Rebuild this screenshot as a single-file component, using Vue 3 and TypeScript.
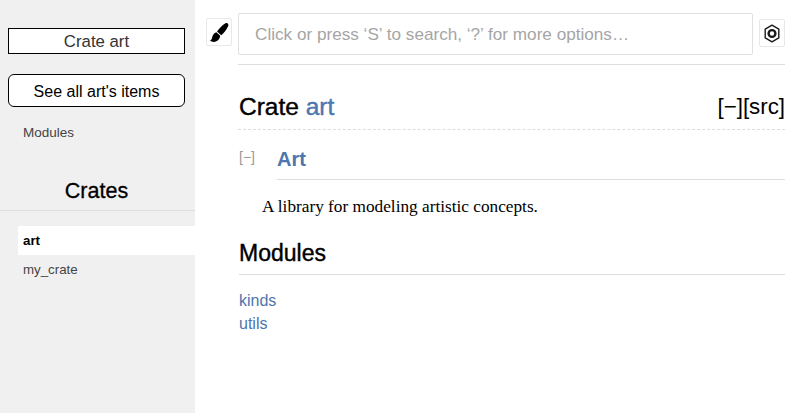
<script setup lang="ts">
const crates: { name: string; current: boolean }[] = [
  { name: 'art', current: true },
  { name: 'my_crate', current: false },
]
const modules: string[] = ['kinds', 'utils']
</script>

<template>
  <div class="page">
    <aside class="sidebar">
      <p class="location">Crate art</p>
      <a class="all-items">See all art's items</a>
      <a class="side-link">Modules</a>
      <h2 class="crates-title">Crates</h2>
      <ul class="crate-list">
        <li v-for="c in crates" :key="c.name" :class="{ current: c.current }">{{ c.name }}</li>
      </ul>
    </aside>
    <main class="main">
      <nav class="search-bar">
        <div class="brush-btn">
          <svg width="19" height="19" viewBox="0 0 17 17">
            <path d="M13.800.2C15.600-.4 16.900.9 16.300 2.600 15 5.600 12.800 8.600 10 11L6.300 7.500C8.500 4.800 11.200 1.400 13.800.2z" fill="#000" />
            <path d="M5.700 8.300l3.400 3.200C9 14.200 6.600 16.900 3.500 16.900 2 16.900.8 16.500 0 15.700 1.400 15.300 1.700 14 2 12.600 2.500 10.500 3.700 8.900 5.700 8.300z" fill="#000" />
          </svg>
        </div>
        <div class="search-input">Click or press ‘S’ to search, ‘?’ for more options…</div>
        <div class="gear-btn">
          <svg width="16" height="19" viewBox="0 0 16 19" fill="none" stroke="#1a1a1a">
            <path d="M8 1.200l6.800 3.900v8.800L8 17.800l-6.800-3.900V5.100z" stroke-width="1.400" stroke-linejoin="round" />
            <circle cx="8" cy="9.500" r="3.400" stroke-width="2.400" />
          </svg>
        </div>
      </nav>
      <header class="title-row">
        <h1>Crate <a>art</a></h1>
        <span class="out-of-band">[−][src]</span>
      </header>
      <section class="doc-head">
        <span class="toggle">[−]</span>
        <h2 class="doc-title">Art</h2>
      </section>
      <p class="doc-text">A library for modeling artistic concepts.</p>
      <h2 class="section-title">Modules</h2>
      <div class="module-list">
        <a v-for="m in modules" :key="m">{{ m }}</a>
      </div>
    </main>
  </div>
</template>

<style scoped>
.page {
  display: flex;
  width: 800px;
  height: 413px;
  overflow: hidden;
  background: #fff;
  color: #000;
  font-family: "Liberation Sans", Arial, sans-serif;
}
.sidebar {
  box-sizing: border-box;
  width: 195px;
  flex: none;
  height: 100%;
  background: #f0f0f0;
  padding-top: 28px;
}
.location {
  box-sizing: border-box;
  margin: 0 10px 0 8px;
  height: 26px;
  line-height: 25px;
  border: 1px solid #000;
  background: #fff;
  text-align: center;
  font-size: 16.800px;
  color: #333;
}
.all-items {
  display: block;
  box-sizing: border-box;
  margin: 20px 10px 0 8px;
  height: 33px;
  line-height: 33px;
  border: 1px solid #000;
  border-radius: 6px;
  background: #fff;
  text-align: center;
  font-size: 16px;
  color: #000;
}
.side-link {
  display: block;
  margin: 17px 0 0 23px;
  line-height: 18px;
  font-size: 13.500px;
  color: #444;
}
.crates-title {
  box-sizing: border-box;
  margin: 33px 0 0;
  height: 36px;
  padding-right: 2px;
  line-height: 32px;
  border-bottom: 1px solid #ddd;
  text-align: center;
  font-size: 21.500px;
  font-weight: 400;
  color: #000;
  -webkit-text-stroke: 0.300px #000;
}
.crate-list {
  list-style: none;
  margin: 15px 0 0 18px;
  padding: 0;
  font-size: 13.300px;
  color: #444;
}
.crate-list li {
  height: 29px;
  line-height: 29px;
  padding-left: 5px;
}
.crate-list li.current {
  background: #fff;
  color: #000;
  font-weight: 700;
}
.main {
  box-sizing: border-box;
  flex: 1;
  min-width: 0;
  padding: 13px 15px 0 11px;
}
.search-bar {
  display: flex;
  align-items: flex-start;
  gap: 6px;
}
.brush-btn,
.gear-btn {
  box-sizing: border-box;
  display: flex;
  align-items: center;
  justify-content: center;
  flex: none;
  width: 26px;
  height: 28px;
  margin-top: 5px;
  border: 1px solid #e8e8e8;
  border-radius: 2px;
  background: #fff;
}
.gear-btn {
  margin-top: 6px;
}
.search-input {
  box-sizing: border-box;
  flex: 1;
  height: 42px;
  line-height: 40px;
  padding-left: 16px;
  border: 1px solid #e0e0e0;
  border-radius: 2px;
  font-size: 17.150px;
  color: #a5a5a5;
}
.title-row {
  display: flex;
  align-items: center;
  justify-content: space-between;
  box-sizing: border-box;
  margin: 9px 0 0 32px;
  height: 66px;
  padding: 20px 0 0 1px;
  border-top: 1px solid #ddd;
  border-bottom: 1px dashed #ddd;
}
.title-row h1 {
  margin: 0;
  font-size: 24.500px;
  font-weight: 400;
  -webkit-text-stroke: 0.400px #000;
}
.title-row h1 a {
  color: #4d76ae;
  -webkit-text-stroke: 0.400px #4d76ae;
}
.out-of-band {
  font-size: 22.300px;
  color: #000;
}
.doc-head {
  display: flex;
  align-items: flex-start;
  margin: 13px 0 0 33px;
}
.toggle {
  width: 38px;
  flex: none;
  line-height: 28px;
  font-size: 14px;
  color: #999;
}
.doc-title {
  flex: 1;
  box-sizing: border-box;
  margin: 0;
  height: 37px;
  line-height: 33px;
  border-bottom: 1px solid #ddd;
  font-size: 20px;
  font-weight: 700;
  color: #4d76ae;
}
.doc-text {
  margin: 17px 0 0 56px;
  line-height: 20px;
  font-family: "Liberation Serif", serif;
  font-size: 17.250px;
  color: #000;
}
.section-title {
  box-sizing: border-box;
  margin: 19px 0 0 33px;
  height: 39px;
  line-height: 34px;
  border-bottom: 1px solid #ddd;
  font-size: 23px;
  font-weight: 400;
  color: #000;
  -webkit-text-stroke: 0.400px #000;
}
.module-list {
  margin: 14px 0 0 33px;
  font-size: 16px;
  line-height: 23px;
}
.module-list a {
  display: block;
  color: #4d76ae;
}
</style>
